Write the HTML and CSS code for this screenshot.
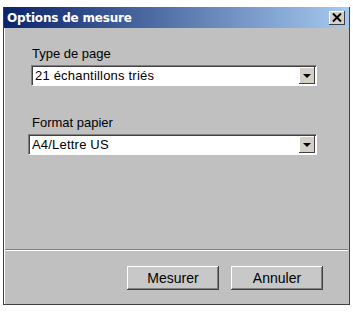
FILE: index.html
```html
<!DOCTYPE html>
<html lang="fr">

<head>
    <meta charset="UTF-8">
    <title>Options de mesure</title>
    <link rel="stylesheet" href="styles.css">
</head>

<body>
    <div class="dialog">
        <!-- Barre de titre -->
        <div class="titlebar">
            <span class="title">Options de mesure</span>
            <span class="close">
                <svg width="10" height="9" viewBox="0 0 10 9">
                    <path d="M1 0.5 L9 8.5 M9 0.5 L1 8.5" stroke="#000" stroke-width="2" />
                </svg>
            </span>
        </div>

        <div class="content">
            <div class="field">
                <label>Type de page</label>
                <div class="combo">
                    <span class="value">21 échantillons triés</span>
                    <span class="arrow"><i></i></span>
                </div>
            </div>

            <div class="field second">
                <label>Format papier</label>
                <div class="combo wide">
                    <span class="value">A4/Lettre US</span>
                    <span class="arrow"><i></i></span>
                </div>
            </div>
        </div>

        <div class="separator"></div>

        <div class="buttons">
            <button>Mesurer</button>
            <button>Annuler</button>
        </div>
    </div>
</body>

</html>
```

FILE: styles.css
```css
/* Général */
body {
    margin: 0;
    padding: 7px 3px 0 3px;
    background-color: #fff;
    font-family: 'Liberation Sans', Arial, sans-serif;
    font-size: 13px;
}

.dialog {
    width: 347px;
    height: 298px;
    background-color: #c0c0c0;
    border: 1px solid #404040;
    border-top: none;
    box-sizing: border-box;
    display: flex;
    flex-direction: column;
    box-shadow: inset 1px 0 0 #fff;
}

/* Barre de titre */
.titlebar {
    height: 21px;
    flex-shrink: 0;
    background: linear-gradient(to right, #0a246a, #a6caf0);
    display: flex;
    align-items: center;
    justify-content: space-between;
    padding: 0 4px 0 3px;
}

.title {
    color: #fff;
    font-family: 'DejaVu Sans', Verdana, sans-serif;
    font-weight: bold;
    font-size: 12px;
    letter-spacing: -0.2px;
}

.close {
    width: 16px;
    height: 14px;
    background-color: #d4d0c8;
    box-shadow: inset -1px -1px 0 #404040, inset 1px 1px 0 #fff;
    display: flex;
    align-items: center;
    justify-content: center;
}

/* Contenu */
.content {
    flex: 1;
    padding: 19px 0 0 24px;
}

.field label {
    display: block;
    color: #000;
    margin: 0 0 4px 4px;
    height: 14px;
    line-height: 14px;
}

.field.second {
    margin-top: 30px;
}

.combo {
    width: 286px;
    height: 21px;
    margin-left: 3px;
    background-color: #fff;
    box-sizing: border-box;
    border-top: 1px solid #808080;
    border-left: 1px solid #808080;
    border-right: 1px solid #fff;
    border-bottom: 1px solid #fff;
    box-shadow: inset 1px 1px 0 #404040;
    display: flex;
    align-items: center;
    justify-content: space-between;
}

.combo.wide {
    width: 289px;
    margin-left: 0;
}

.value {
    padding-left: 3px;
    color: #000;
    letter-spacing: 0.2px;
}

.arrow {
    width: 16px;
    height: 17px;
    margin-right: 1px;
    background-color: #d4d0c8;
    box-shadow: inset -1px -1px 0 #404040, inset 1px 1px 0 #fff;
    display: flex;
    align-items: center;
    justify-content: center;
}

.arrow i {
    width: 0;
    height: 0;
    border-left: 4px solid transparent;
    border-right: 4px solid transparent;
    border-top: 4px solid #000;
}

/* Séparateur */
.separator {
    height: 1px;
    flex-shrink: 0;
    background-color: #808080;
    border-bottom: 1px solid #fff;
    margin: 0 1px;
}

/* Boutons */
.buttons {
    height: 53px;
    flex-shrink: 0;
    display: flex;
    justify-content: flex-end;
    align-items: flex-start;
    gap: 12px;
    padding: 15px 26px 0 0;
    box-sizing: border-box;
}

button {
    width: 92px;
    height: 24px;
    background-color: #c8c8c8;
    border: none;
    box-shadow: inset -1px -1px 0 #404040, inset 1px 1px 0 #fff, inset -2px -2px 0 #808080;
    font-family: 'Liberation Sans', Arial, sans-serif;
    font-size: 14px;
    color: #000;
    padding: 0;
}
```
